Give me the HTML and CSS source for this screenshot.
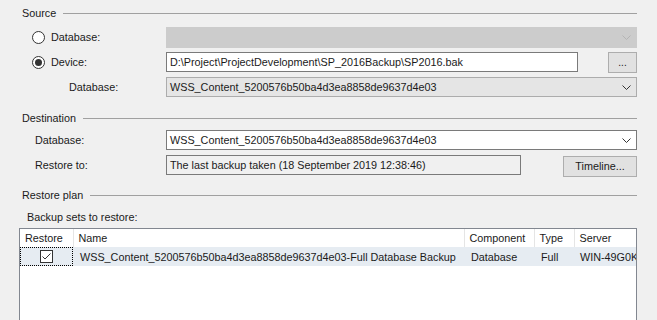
FILE: index.html
```html
<!DOCTYPE html>
<html lang="en">
<head>
    <meta charset="UTF-8">
    <title>Restore Database</title>
    <link rel="stylesheet" href="styles.css">
</head>
<body>
    <div class="dialog">
        <!-- Source -->
        <div class="group-title"><span>Source</span><div class="rule"></div></div>

        <div class="row row-first">
            <label class="label radio-label"><span class="radio"></span>Database:</label>
            <div class="combo combo-disabled">
                <span class="combo-text"></span>
                <svg class="arrow" width="9" height="5" viewBox="0 0 9 5"><polyline points="0.5,0.5 4.5,4.5 8.5,0.5" fill="none" stroke="#b4b4b4" stroke-width="1"/></svg>
            </div>
        </div>

        <div class="row">
            <label class="label radio-label"><span class="radio checked"></span>Device:</label>
            <div class="textbox textbox-device">D:\Project\ProjectDevelopment\SP_2016Backup\SP2016.bak</div>
            <button class="btn btn-browse">...</button>
        </div>

        <div class="row">
            <label class="label sub-label">Database:</label>
            <div class="combo combo-readonly">
                <span class="combo-text">WSS_Content_5200576b50ba4d3ea8858de9637d4e03</span>
                <svg class="arrow" width="9" height="5" viewBox="0 0 9 5"><polyline points="0.5,0.5 4.5,4.5 8.5,0.5" fill="none" stroke="#333" stroke-width="1"/></svg>
            </div>
        </div>

        <!-- Destination -->
        <div class="group-title group-next"><span>Destination</span><div class="rule"></div></div>

        <div class="row row-dest">
            <label class="label dest-label">Database:</label>
            <div class="combo">
                <span class="combo-text">WSS_Content_5200576b50ba4d3ea8858de9637d4e03</span>
                <svg class="arrow" width="9" height="5" viewBox="0 0 9 5"><polyline points="0.5,0.5 4.5,4.5 8.5,0.5" fill="none" stroke="#333" stroke-width="1"/></svg>
            </div>
        </div>

        <div class="row">
            <label class="label dest-label">Restore to:</label>
            <div class="textbox textbox-restore">The last backup taken (18 September 2019 12:38:46)</div>
            <button class="btn btn-timeline">Timeline...</button>
        </div>

        <!-- Restore plan -->
        <div class="group-title group-plan"><span>Restore plan</span><div class="rule"></div></div>

        <div class="sets-label">Backup sets to restore:</div>

        <div class="grid">
            <table>
                <colgroup>
                    <col class="c-restore">
                    <col class="c-name">
                    <col class="c-component">
                    <col class="c-type">
                    <col class="c-server">
                </colgroup>
                <thead>
                    <tr>
                        <th>Restore</th>
                        <th>Name</th>
                        <th>Component</th>
                        <th>Type</th>
                        <th>Server</th>
                    </tr>
                </thead>
                <tbody>
                    <tr class="selected">
                        <td class="check-cell">
                            <span class="focus-rect">
                                <svg width="13" height="13" viewBox="0 0 13 13"><rect x="0.5" y="0.5" width="12" height="12" fill="#fff" stroke="#333"/><polyline points="2.5,6.5 5,9 10.5,3.5" fill="none" stroke="#333" stroke-width="1"/></svg>
                            </span>
                        </td>
                        <td>WSS_Content_5200576b50ba4d3ea8858de9637d4e03-Full Database Backup</td>
                        <td>Database</td>
                        <td>Full</td>
                        <td class="server-cell">WIN-49G0K</td>
                    </tr>
                </tbody>
            </table>
        </div>
    </div>
</body>
</html>
```

FILE: styles.css
```css
:root {
    --face: #f0f0f0;
    --text: #1a1a1a;
    --edge: #7a7a7a;
    --rule: #a0a0a0;
    --button: #e1e1e1;
    --button-edge: #adadad;
    --row-select: #e6ecf2;
}

* {
    margin: 0;
    padding: 0;
    box-sizing: border-box;
}

body {
    background-color: var(--face);
    color: var(--text);
    font-family: 'Liberation Sans', Arial, sans-serif;
    font-size: 10.8px;
    overflow: hidden;
}

.dialog {
    padding: 5px 20px 0 0;
}

.group-title {
    display: flex;
    align-items: center;
    gap: 7px;
    height: 16px;
    padding-left: 22px;
}

.group-title .rule {
    flex: 1;
    height: 1px;
    background-color: var(--rule);
}

.group-next {
    margin-top: 13px;
}

.group-plan {
    margin-top: 12px;
}

.row {
    display: flex;
    align-items: center;
    height: 20px;
    margin-top: 5px;
}

.row-first {
    margin-top: 6px;
}

.row-dest {
    margin-top: 4px;
}

.label {
    display: flex;
    align-items: center;
    flex: 0 0 166px;
    height: 100%;
}

.radio-label {
    padding-left: 32px;
    gap: 6px;
}

.sub-label {
    padding-left: 69px;
}

.dest-label {
    padding-left: 35px;
}

.radio {
    position: relative;
    width: 13px;
    height: 13px;
    border: 1px solid #333;
    border-radius: 50%;
    background-color: #fff;
}

.radio.checked::after {
    content: '';
    position: absolute;
    left: 2px;
    top: 2px;
    width: 7px;
    height: 7px;
    border-radius: 50%;
    background-color: #333;
}

.combo {
    flex: 1;
    display: flex;
    align-items: center;
    height: 20px;
    padding: 0 5px 0 3px;
    border: 1px solid var(--edge);
    background-color: #fff;
}

.combo-text {
    flex: 1;
}

.combo-disabled {
    height: 21px;
    background-color: #cccccc;
    border-color: #cccccc;
}

.combo-readonly {
    background-color: #e5e5e5;
    border-color: #acacac;
}

.textbox {
    display: flex;
    align-items: center;
    height: 20px;
    padding-left: 3px;
    border: 1px solid var(--edge);
    background-color: #fff;
}

.textbox-device {
    width: 412px;
}

.textbox-restore {
    width: 355px;
    background-color: var(--face);
}

.btn {
    height: 21px;
    border: 1px solid var(--button-edge);
    background-color: var(--button);
    font: inherit;
    color: var(--text);
}

.btn-browse {
    width: 29px;
    margin-left: auto;
    font-size: 10px;
}

.btn-timeline {
    width: 74px;
    margin-left: auto;
    margin-top: 2px;
}

.sets-label {
    height: 14px;
    line-height: 14px;
    margin-top: 7px;
    padding-left: 27px;
}

.grid {
    margin: 4px 0 0 19px;
    height: 120px;
    border: 1px solid #828790;
    background-color: #fff;
    overflow: hidden;
}

.grid table {
    width: 617px;
    table-layout: fixed;
    border-collapse: collapse;
}

.c-restore { width: 53px; }
.c-name { width: 391px; }
.c-component { width: 70px; }
.c-type { width: 40px; }
.c-server { width: 63px; }

.grid th {
    height: 18px;
    padding-left: 5px;
    font-weight: normal;
    text-align: left;
    white-space: nowrap;
    border-right: 1px solid #e5e5e5;
}

.grid td {
    height: 19px;
    padding-left: 7px;
    white-space: nowrap;
    overflow: hidden;
}

.grid td.server-cell {
    padding-left: 6px;
}

.grid tr.selected td {
    background-color: var(--row-select);
}

.grid td.check-cell {
    padding: 0;
}

.focus-rect {
    display: flex;
    align-items: center;
    justify-content: center;
    height: 19px;
    border: 1px dotted #000;
}
```
